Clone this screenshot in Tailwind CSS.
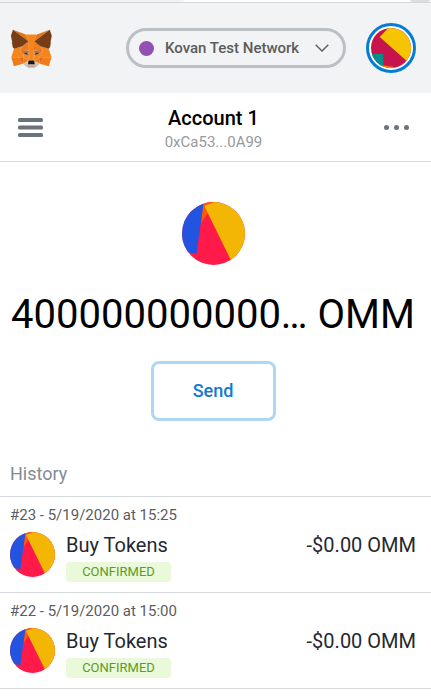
<!DOCTYPE html>
<html lang="en">
<head>
<meta charset="utf-8">
<meta name="viewport" content="width=device-width, initial-scale=1">
<title>Wallet</title>
<script src="https://cdn.jsdelivr.net/npm/@tailwindcss/browser@4"></script>
</head>
<body class="bg-white font-[Roboto,sans-serif] text-black">
<svg class="hidden" aria-hidden="true">
  <symbol id="token" viewBox="0 0 186 186">
    <path fill="#ff1a49" d="M0 0h186v186H0z"/>
    <path fill="#fb5a06" d="M63 0h40L74 36 56 62z"/>
    <path fill="#2354e1" d="M0 0h64L43 153 0 147z"/>
    <path fill="#f3b604" d="M66 12 96 0h90v171h-42z"/>
  </symbol>
</svg>

<div class="flex h-[3px] items-start justify-between border-b border-[#d5d7d9] bg-white pr-px" aria-hidden="true">
  <div class="h-[2px] w-[184px] rounded-br-sm bg-[#f1f2f4]"></div>
  <div class="h-[2px] w-5 rounded-b-full bg-[#dcdddf]"></div>
</div>

<header class="flex h-[90px] items-center bg-[#f2f3f4] pr-[15px] pl-[10px]">
  <a href="#" aria-label="Home" class="mr-auto">
    <svg class="h-10 w-[42px]" viewBox="26 28 262 246" preserveAspectRatio="xMaxYMax meet" aria-hidden="true">
      <path fill="#e2761b" d="M274.1 35.5 174.6 109.4 193 65.8zM44.4 35.5l98.7 74.6-17.5-44.3z"/>
      <g fill="#ee7c1a">
        <polygon points="50.1,263 106.8,247.4 80.3,206.8 33.9,207.7"/>
        <polygon points="268.5,263 211.8,247.4 238.3,206.8 284.8,207.7"/>
        <polygon points="106.8,247.4 140.6,230.9 111.4,208.1"/>
        <polygon points="177.9,230.9 211.8,247.4 207.1,208.1"/>
        <polygon points="103.6,138.2 87.8,162.1 144.1,164.6 142.1,104.1"/>
        <polygon points="214.9,138.2 175.9,103.4 174.6,164.6 230.8,162.1"/>
      </g>
      <g fill="#d7c1b3">
        <polygon points="211.8,247.4 177.9,230.9 180.6,253 180.3,262.3"/>
        <polygon points="106.8,247.4 138.3,262.3 138.1,253 140.6,230.9"/>
      </g>
      <g fill="#dc6a1c">
        <polygon points="106.8,247.4 111.6,206.8 80.3,207.7"/>
        <polygon points="207,206.8 211.8,247.4 238.3,207.7"/>
        <polygon points="230.8,162.1 174.6,164.6 179.8,193.5 188.1,176.1 208.1,185.2"/>
        <polygon points="110.6,185.2 130.6,176.1 138.8,193.5 144.1,164.6 87.8,162.1"/>
      </g>
      <g fill="#e4751f">
        <polygon points="87.8,162.1 111.4,208.1 110.6,185.2"/>
        <polygon points="208.1,185.2 207.1,208.1 230.8,162.1"/>
        <polygon points="144.1,164.6 138.8,193.5 145.4,227.6 146.9,182.7"/>
        <polygon points="174.6,164.6 171.9,182.6 173.1,227.6 179.8,193.5"/>
      </g>
      <g fill="#f6851b">
        <polygon points="179.8,193.5 173.1,227.6 177.9,230.9 207.1,208.1 208.1,185.2"/>
        <polygon points="110.6,185.2 111.4,208.1 140.6,230.9 145.4,227.6 138.8,193.5"/>
        <polygon points="267.2,153.5 214.9,138.2 230.8,162.1 207.1,208.1 238.3,207.7 284.8,207.7"/>
        <polygon points="103.6,138.2 51.3,153.5 33.9,207.7 80.3,207.7 111.4,208.1 87.8,162.1"/>
        <polygon points="174.6,164.6 177.9,106.9 193.1,65.8 125.6,65.8 140.6,106.9 144.1,164.6 145.3,182.8 145.4,227.6 173.1,227.6 173.3,182.8"/>
      </g>
      <g fill="#233447">
        <polygon points="138.8,193.5 110.6,185.2 130.5,176.1"/>
        <polygon points="179.7,193.5 188,176.1 208,185.2"/>
      </g>
      <polygon fill="#c0ad9e" points="180.3,262.3 180.6,253 178.1,250.8 140.4,250.8 138.1,253 138.3,262.3 106.8,247.4 117.8,256.4 140.1,271.9 178.4,271.9 200.8,256.4 211.8,247.4"/>
      <polygon fill="#161616" points="177.9,230.9 173.1,227.6 145.4,227.6 140.6,230.9 138.1,253 140.4,250.8 178.1,250.8 180.6,253"/>
      <g fill="#763d16">
        <polygon points="278.3,114.2 286.8,73.4 274.1,35.5 177.9,106.9 214.9,138.2 267.2,153.5 278.8,140 273.8,136.4 281.8,129.1 275.6,124.3 283.6,118.2"/>
        <polygon points="31.8,73.4 40.3,114.2 34.9,118.2 42.9,124.3 36.8,129.1 44.8,136.4 39.8,140 51.3,153.5 103.6,138.2 140.6,106.9 44.4,35.5"/>
      </g>
    </svg>
  </a>
  <button type="button" class="mr-5 flex h-10 w-[220px] items-center rounded-full border-3 border-[#bbc0c5] px-[10px]">
    <span class="size-[15px] rounded-full bg-[#9250b5]"></span>
    <span class="ml-[11px] text-[15px] leading-5 font-medium text-[#5b5b5b]">Kovan Test Network</span>
    <svg class="mr-1 ml-auto h-2 w-[14px]" viewBox="0 0 14 8" fill="none" stroke="#5b5d60" stroke-width="1.4" aria-hidden="true"><path d="M.7.7 7 7 13.300.7"/></svg>
  </button>
  <button type="button" aria-label="My accounts" class="flex size-[50px] items-center justify-center rounded-full border-3 border-[#037dd6] bg-white">
    <svg class="size-10 rounded-full" viewBox="0 0 120 120" aria-hidden="true">
      <path fill="#c8144c" d="M0 0h120v120H0z"/>
      <path fill="#f5c400" d="M52 0h68v110L26 27z"/>
      <path fill="#018e8c" d="M0 78h37v42H0z"/>
      <path fill="#fa7900" d="m35 112 50 7v4H35z"/>
    </svg>
  </button>
</header>

<section class="flex h-[69px] items-center justify-between border-b border-[#d2d8dd] pr-[22px] pl-[18px]">
  <button type="button" aria-label="Menu">
    <svg class="h-[19px] w-[25px]" viewBox="0 0 25 19" fill="#6a737d" aria-hidden="true">
      <rect width="25" height="4" rx="1.500"/>
      <rect y="7.500" width="25" height="4" rx="1.500"/>
      <rect y="15" width="25" height="4" rx="1.500"/>
    </svg>
  </button>
  <button type="button" class="flex flex-col items-center pt-[6px]">
    <span class="text-xl leading-6 font-medium">Account 1</span>
    <span class="text-[15px] leading-6 text-[#989a9b]">0xCa53...0A99</span>
  </button>
  <button type="button" aria-label="Account options" class="flex gap-[5px]">
    <span class="size-[5px] rounded-full bg-[#6a737d]"></span>
    <span class="size-[5px] rounded-full bg-[#6a737d]"></span>
    <span class="size-[5px] rounded-full bg-[#6a737d]"></span>
  </button>
</section>

<main>
  <section class="flex flex-col items-center pt-10 pr-[15px] pl-[10px]">
    <svg class="size-[63px] rounded-full" aria-hidden="true"><use href="#token"/></svg>
    <p class="mt-[26px] text-[40px] leading-12 whitespace-nowrap">400000000000… OMM</p>
    <button type="button" class="mt-[22px] h-[60px] w-[125px] rounded-lg border-3 border-[#b0d7f2] text-lg font-medium text-[#1279d3]">Send</button>
  </section>

  <section class="mt-10">
    <h2 class="pb-[10px] pl-[10px] text-lg leading-[25px] text-[#848c96]">History</h2>
    <ul class="border-b border-[#d6d9dc]">
      <li class="border-t border-[#d6d9dc] pt-2 pr-[15px] pb-[10px] pl-[10px]">
        <p class="text-[15px] leading-5 text-[#5b5d60]">#23 - 5/19/2020 at 15:25</p>
        <div class="mt-[7px] flex items-start">
          <svg class="size-[45px] rounded-full" aria-hidden="true"><use href="#token"/></svg>
          <div class="ml-[11px]">
            <h3 class="text-xl leading-[26px] text-[#24292e]">Buy Tokens</h3>
            <p class="mt-1 w-[105px] rounded-[4px] bg-[#eaf9d9] text-center text-[13px] leading-5 text-[#5f9a26]">CONFIRMED</p>
          </div>
          <p class="ml-auto text-xl leading-[26px] text-[#24292e]">-$0.00 OMM</p>
        </div>
      </li>
      <li class="border-t border-[#d6d9dc] pt-2 pr-[15px] pb-[10px] pl-[10px]">
        <p class="text-[15px] leading-5 text-[#5b5d60]">#22 - 5/19/2020 at 15:00</p>
        <div class="mt-[7px] flex items-start">
          <svg class="size-[45px] rounded-full" aria-hidden="true"><use href="#token"/></svg>
          <div class="ml-[11px]">
            <h3 class="text-xl leading-[26px] text-[#24292e]">Buy Tokens</h3>
            <p class="mt-1 w-[105px] rounded-[4px] bg-[#eaf9d9] text-center text-[13px] leading-5 text-[#5f9a26]">CONFIRMED</p>
          </div>
          <p class="ml-auto text-xl leading-[26px] text-[#24292e]">-$0.00 OMM</p>
        </div>
      </li>
    </ul>
  </section>
</main>
</body>
</html>
